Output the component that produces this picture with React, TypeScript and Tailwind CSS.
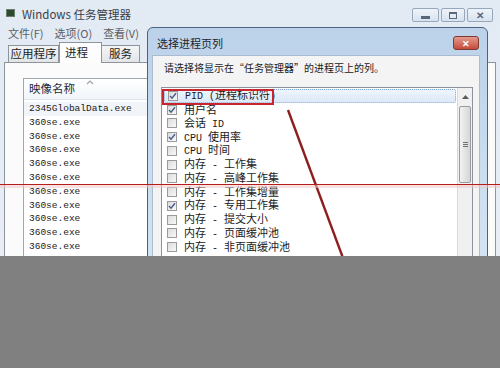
import React from "react";

const columns: [string, boolean][] = [
  ["PID (进程标识符)", true],
  ["用户名", true],
  ["会话 ID", false],
  ["CPU 使用率", true],
  ["CPU 时间", false],
  ["内存 - 工作集", false],
  ["内存 - 高峰工作集", false],
  ["内存 - 工作集增量", false],
  ["内存 - 专用工作集", true],
  ["内存 - 提交大小", false],
  ["内存 - 页面缓冲池", false],
  ["内存 - 非页面缓冲池", false],
];

const processes = ["2345GlobalData.exe", ...Array(10).fill("360se.exe")];

// ascii runs in a half-width mono face, the rest in the CJK face
function Mixed({ text }: { text: string }) {
  const parts = text.split(/([\x20-\x7e]+)/).filter(Boolean);
  return (
    <>
      {parts.map((p, i) =>
        /^[\x20-\x7e]+$/.test(p) ? (
          <span key={i} className="font-['Liberation_Mono',monospace] text-[10px] whitespace-pre leading-none">
            {p}
          </span>
        ) : (
          <span key={i} className="leading-none">{p}</span>
        )
      )}
    </>
  );
}

function Checkbox({ checked }: { checked: boolean }) {
  return (
    <div className="w-[10px] h-[10px] shrink-0 border border-[#9a9a9a] bg-gradient-to-br from-[#dcdcdc] to-[#f8f8f8] flex items-center justify-center">
      {checked && (
        <svg width="8" height="8" viewBox="0 0 8 8">
          <path d="M1 4 L3 6.2 L7 1.2" fill="none" stroke="#4c5f8f" strokeWidth="1.5" />
        </svg>
      )}
    </div>
  );
}

function WinButton({ w, children }: { w: string; children: React.ReactNode }) {
  return (
    <div
      className={`${w} h-[14px] rounded-[2px] border border-[#97a8bd] bg-gradient-to-b from-[#eef3f9] to-[#d8e3ef] flex items-center justify-center`}
    >
      {children}
    </div>
  );
}

function MainWindow() {
  return (
    <div className="w-[500px] h-[256px] flex flex-col bg-gradient-to-b from-[#e2eaf4] to-[#e9eef5] font-['Noto_Sans_CJK_SC',sans-serif]">
      <div data-element="title-bar" className="h-[26px] flex items-center pl-[6px] pr-[7px] shrink-0">
        <div className="w-[9px] h-[8px] bg-[#2d4a2e] border border-[#6a7d6a] mr-[7px]" />
        <span className="text-[11.5px] text-[#3a3f47] mt-[3px]">Windows 任务管理器</span>
        <div className="ml-auto flex gap-[2px] mt-[4px]">
          <WinButton w="w-[27px]">
            <div className="w-[9px] h-[3px] bg-[#59677a] mt-[4px]" />
          </WinButton>
          <WinButton w="w-[24px]">
            <div className="w-[8px] h-[7px] border border-[#59677a] border-t-2" />
          </WinButton>
          <WinButton w="w-[26px]">
            <span className="text-[10px] leading-none text-[#59677a] font-bold">✕</span>
          </WinButton>
        </div>
      </div>
      <div data-element="menu" className="h-[15px] flex items-center gap-[11px] pl-[8px] text-[11px] text-[#5b5f66] shrink-0">
        <span>文件(F)</span>
        <span>选项(O)</span>
        <span>查看(V)</span>
      </div>
      <div data-element="tabs" className="h-[21px] flex items-end pl-[8px] text-[11.5px] text-[#222] shrink-0 relative z-10">
        <div className="w-[51px] h-[17px] border border-[#8e949c] border-b-0 bg-gradient-to-b from-[#f4f5f6] to-[#e2e4e7] flex items-center justify-center">
          应用程序
        </div>
        <div className="w-[43px] h-[21px] border border-[#8e949c] border-b-0 bg-[#fdfdfd] -mb-px flex items-start pt-[1px] pl-[5px]">
          进程
        </div>
        <div className="w-[38px] h-[17px] border border-[#8e949c] border-b-0 border-l-0 bg-gradient-to-b from-[#f4f5f6] to-[#e2e4e7] flex items-center justify-center">
          服务
        </div>
      </div>
      <div data-element="panel" className="flex-1 ml-[4px] mr-[4px] border border-[#8e949c] border-b-0 bg-[#fbfbfc] pt-[15px] pl-[18px] min-h-0">
        <div className="w-[200px] h-full border border-[#a0a6ae] border-b-0 bg-white overflow-hidden">
          <div className="h-[21px] relative flex items-center pl-[5px] border-b border-[#dde3ea] bg-gradient-to-b from-[#ffffff] to-[#f1f5fa] text-[11.5px] text-[#1d2a3a]">
            映像名称
            <svg className="absolute left-[62px] top-[1px]" width="8" height="5" viewBox="0 0 8 5">
              <path d="M1 4 L4 1 L7 4" fill="none" stroke="#9aa5b3" strokeWidth="1.2" />
            </svg>
          </div>
          <div className="pt-[2px]">
            {processes.map((p, i) => (
              <div
                key={i}
                className={`h-[13.8px] leading-[13.8px] pl-[5px] font-['Liberation_Mono',monospace] text-[9.5px] text-[#1a1a1a] ${
                  i === 0 ? "bg-[#f1f5fa]" : ""
                }`}
              >
                {p}
              </div>
            ))}
          </div>
        </div>
      </div>
    </div>
  );
}

function Dialog() {
  return (
    <div
      data-component="ColumnDialog"
      className="absolute left-[147px] top-[27px] w-[341px] h-[240px] rounded-t-[6px] border border-[#4a6380] bg-gradient-to-b from-[#bcd2e9] to-[#d5e4f2] flex flex-col font-['Noto_Sans_CJK_SC',sans-serif]"
    >
      <div className="h-[27px] flex items-center pl-[9px] pr-[8px] shrink-0">
        <span className="text-[11px] text-[#1b2430] mt-[3px]">选择进程页列</span>
        <div className="ml-auto w-[26px] h-[14px] rounded-[3px] border border-[#7d3a32] bg-gradient-to-b from-[#e39a8c] to-[#c54a3a] flex items-center justify-center mt-[3px]">
          <span className="text-[9px] leading-none text-white font-bold">✕</span>
        </div>
      </div>
      <div className="flex-1 ml-[4px] mr-[7px] bg-[#f4f4f4] border border-[#a9bcd0] border-b-0 pt-[5px] pl-[11px]">
        <div className="text-[10px] text-[#1a1a1a] leading-[14px] whitespace-nowrap">请选择将显示在“任务管理器”的进程页上的列。</div>
        <div className="mt-[12px] ml-[-3px] w-[312px] h-[200px] border border-[#8c929b] bg-white flex">
          <div className="flex-1 pt-[1px] pl-[2px]">
            {columns.map(([label, checked], i) => (
              <div
                key={i}
                className={`h-[13.75px] flex items-center pl-[3px] gap-[7px] text-[11px] leading-none text-[#1a1a1a] ${
                  i === 0 ? "border border-dotted border-[#7ea4d2] bg-gradient-to-b from-[#eef5fd] to-[#dce9f8] rounded-[2px] mr-[1px]" : ""
                }`}
              >
                <Checkbox checked={checked} />
                <span className="whitespace-pre leading-none">
                  <Mixed text={label} />
                </span>
              </div>
            ))}
          </div>
          <div data-element="scrollbar" className="w-[15px] border-l border-[#d9d9d9] bg-[#f0f0f0] flex flex-col items-center">
            <div className="h-[17px] flex items-center justify-center">
              <svg width="7" height="4" viewBox="0 0 7 4">
                <path d="M0 4 L3.5 0 L7 4 Z" fill="#5a5a5a" />
              </svg>
            </div>
            <div className="mt-[1px] w-[12px] h-[77px] rounded-[2px] border border-[#9b9b9b] bg-gradient-to-r from-[#f2f2f2] to-[#d6d6d6] flex flex-col items-center justify-center gap-[1px]">
              <div className="w-[5px] h-px bg-[#707070]" />
              <div className="w-[5px] h-px bg-[#707070]" />
              <div className="w-[5px] h-px bg-[#707070]" />
            </div>
          </div>
        </div>
      </div>
    </div>
  );
}

export default function App() {
  return (
    <div className="w-[500px] h-[368px] bg-[#808080] overflow-hidden">
      <div className="relative w-[500px] h-[256px] overflow-hidden">
        <MainWindow />
        <Dialog />
        {/* annotation box around the PID entry */}
        <div className="absolute left-[162px] top-[89px] w-[112px] h-[16px] border-2 border-[#c8262e]" />
        {/* arrow line and scan line */}
        <svg className="absolute left-0 top-0" width="500" height="256">
          <line x1="288" y1="110" x2="343" y2="258" stroke="#8d1e1c" strokeWidth="2.4" />
          <rect x="0" y="185" width="500" height="3" fill="#f3c9c9" opacity="0.55" />
          <line x1="0" y1="184.5" x2="500" y2="184.5" stroke="#b51c1c" strokeWidth="1" />
        </svg>
      </div>
    </div>
  );
}
